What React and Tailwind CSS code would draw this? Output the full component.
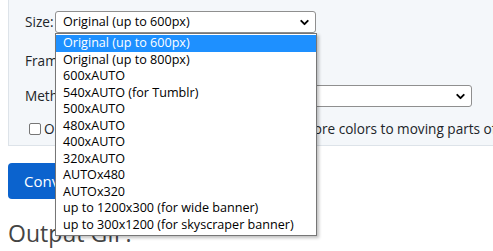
import { ChevronDown } from 'lucide-react';

const sizes = [
  'Original (up to 600px)',
  'Original (up to 800px)',
  '600xAUTO',
  '540xAUTO (for Tumblr)',
  '500xAUTO',
  '480xAUTO',
  '400xAUTO',
  '320xAUTO',
  'AUTOx480',
  'AUTOx320',
  'up to 1200x300 (for wide banner)',
  'up to 300x1200 (for skyscraper banner)',
];

function FakeSelect({ value, className }) {
  return (
    <div
      className={`h-[22px] flex items-center justify-between bg-white border border-[#8f8f8f] rounded-[3px] pl-[7px] pr-[4px] text-[12.6px] text-black ${className}`}
    >
      <span className="whitespace-nowrap overflow-hidden">{value}</span>
      <ChevronDown size={13} strokeWidth={3.5} className="shrink-0 text-black" />
    </div>
  );
}

export default function App() {
  return (
    <div
      className="relative w-[493px] h-[251px] overflow-hidden bg-white text-[#212529]"
      style={{ fontFamily: '"Open Sans", "Noto Sans", Arial, sans-serif' }}
    >
      {/* options panel */}
      <div className="ml-2 w-[520px] h-[146px] bg-[#f4f7fa] border-l border-b border-[#dde3e9] pl-[16px] pt-[11px] text-[13.6px]">
        <div className="flex items-center gap-[2px] h-[22px]">
          <span className="w-[28px]">Size:</span>
          <FakeSelect value="Original (up to 600px)" className="w-[261px]" />
        </div>

        <div className="flex items-center h-[22px] mt-[17px]">
          <span className="w-[122px] whitespace-nowrap">Frame rate (FPS):</span>
          <FakeSelect value="10 (max 20s)" className="w-[120px]" />
        </div>

        <div className="flex items-center h-[22px] mt-[13px]">
          <span className="w-[75px]">Method:</span>
          <FakeSelect value="FFMPEG (default)" className="w-[372px]" />
        </div>

        <div className="flex items-center h-[22px] mt-[11px] pl-[4px] whitespace-nowrap">
          <span className="w-[12px] h-[12px] border border-[#767676] rounded-[2px] bg-white shrink-0" />
          <span className="ml-[3px]">Optimize for a static background (assign more colors to moving parts of the image)</span>
        </div>
      </div>

      {/* convert button */}
      <button className="ml-2 mt-[17px] h-[36px] px-[16px] rounded-[4px] bg-[#0b63ce] text-white text-[15px] whitespace-nowrap">
        Convert to GIF!
      </button>

      <h2 className="ml-2 mt-[19px] text-[23px] leading-[30px] text-[#444] whitespace-nowrap">Output GIF:</h2>

      {/* opened dropdown list */}
      <div className="absolute left-[55px] top-[33px] w-[262px] bg-white border border-[#767676] shadow-[2px_2px_3px_rgba(0,0,0,0.25)] pt-[1px] pb-[2px] text-[12.6px] text-black">
        {sizes.map((s, i) => (
          <div
            key={s}
            className={`h-[16.5px] leading-[16.5px] pl-[7px] whitespace-nowrap ${i === 0 ? 'bg-[#1e90ff] text-white' : ''}`}
          >
            {s}
          </div>
        ))}
      </div>
    </div>
  );
}
